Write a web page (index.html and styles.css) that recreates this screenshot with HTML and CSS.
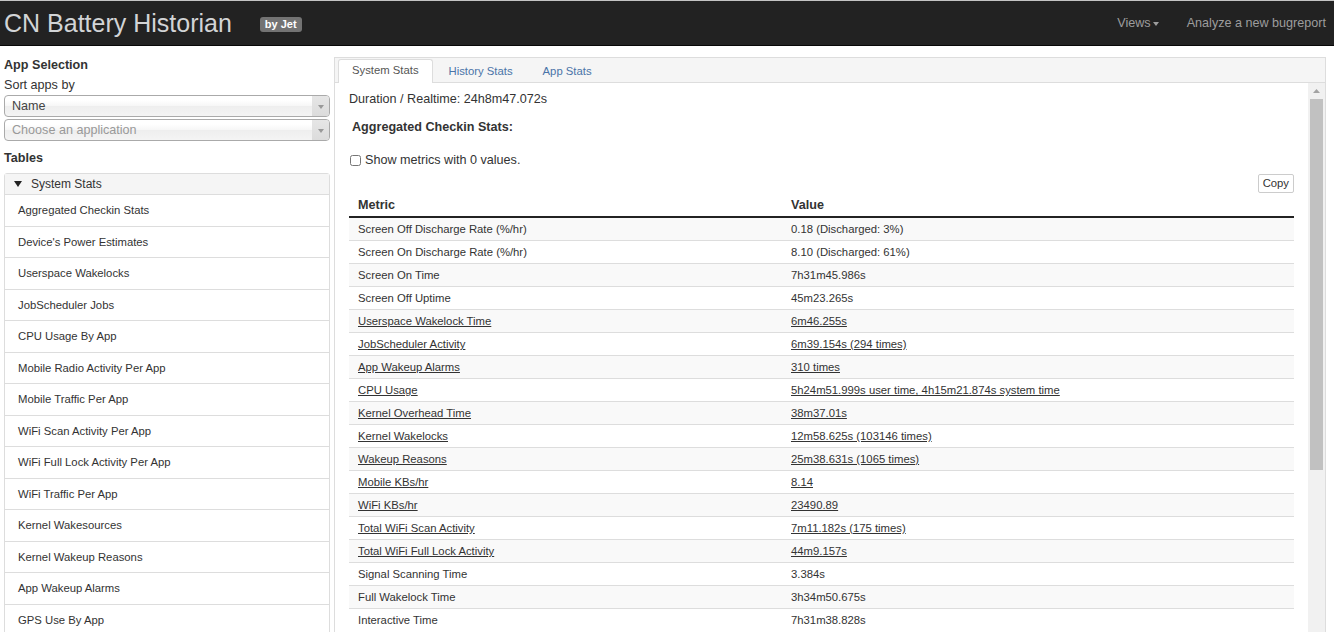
FILE: index.html
```html
<!DOCTYPE html>
<html>
<head>
<meta charset="utf-8">
<title>CN Battery Historian</title>
<link rel="stylesheet" href="styles.css">
</head>
<body>
<header class="navbar">
  <div class="brand">CN Battery Historian</div>
  <span class="badge">by Jet</span>
  <nav class="nav-right">
    <span class="nav-item">Views<span class="caret"></span></span>
    <span class="nav-item">Analyze a new bugreport</span>
  </nav>
</header>
<div class="layout">
  <aside class="sidebar">
    <div class="side-title">App Selection</div>
    <div class="side-label">Sort apps by</div>
    <div class="select"><span class="select-text">Name</span><span class="select-arrow"><span class="tri-sm"></span></span></div>
    <div class="select select-2"><span class="select-text placeholder">Choose an application</span><span class="select-arrow"><span class="tri-sm"></span></span></div>
    <div class="side-title tables-title">Tables</div>
    <div class="panel">
      <div class="panel-head"><span class="tri-down"></span>System Stats</div>
      <div class="panel-item">Aggregated Checkin Stats</div>
      <div class="panel-item">Device's Power Estimates</div>
      <div class="panel-item">Userspace Wakelocks</div>
      <div class="panel-item">JobScheduler Jobs</div>
      <div class="panel-item">CPU Usage By App</div>
      <div class="panel-item">Mobile Radio Activity Per App</div>
      <div class="panel-item">Mobile Traffic Per App</div>
      <div class="panel-item">WiFi Scan Activity Per App</div>
      <div class="panel-item">WiFi Full Lock Activity Per App</div>
      <div class="panel-item">WiFi Traffic Per App</div>
      <div class="panel-item">Kernel Wakesources</div>
      <div class="panel-item">Kernel Wakeup Reasons</div>
      <div class="panel-item">App Wakeup Alarms</div>
      <div class="panel-item">GPS Use By App</div>
    </div>
  </aside>
  <main class="main">
    <div class="tabs">
      <span class="tab active">System Stats</span>
      <span class="tab">History Stats</span>
      <span class="tab">App Stats</span>
    </div>
    <div class="pane">
      <div class="content">
        <div class="duration">Duration / Realtime: 24h8m47.072s</div>
        <div class="section-title">Aggregated Checkin Stats:</div>
        <label class="check-line"><input type="checkbox" class="check">Show metrics with 0 values.</label>
        <div class="copy-row"><button class="copy">Copy</button></div>
        <table class="stats">
          <thead>
            <tr><th class="col-metric">Metric</th><th>Value</th></tr>
          </thead>
          <tbody>
            <tr><td>Screen Off Discharge Rate (%/hr)</td><td>0.18 (Discharged: 3%)</td></tr>
            <tr><td>Screen On Discharge Rate (%/hr)</td><td>8.10 (Discharged: 61%)</td></tr>
            <tr><td>Screen On Time</td><td>7h31m45.986s</td></tr>
            <tr><td>Screen Off Uptime</td><td>45m23.265s</td></tr>
            <tr><td><a class="link">Userspace Wakelock Time</a></td><td><a class="link">6m46.255s</a></td></tr>
            <tr><td><a class="link">JobScheduler Activity</a></td><td><a class="link">6m39.154s (294 times)</a></td></tr>
            <tr><td><a class="link">App Wakeup Alarms</a></td><td><a class="link">310 times</a></td></tr>
            <tr><td><a class="link">CPU Usage</a></td><td><a class="link">5h24m51.999s user time, 4h15m21.874s system time</a></td></tr>
            <tr><td><a class="link">Kernel Overhead Time</a></td><td><a class="link">38m37.01s</a></td></tr>
            <tr><td><a class="link">Kernel Wakelocks</a></td><td><a class="link">12m58.625s (103146 times)</a></td></tr>
            <tr><td><a class="link">Wakeup Reasons</a></td><td><a class="link">25m38.631s (1065 times)</a></td></tr>
            <tr><td><a class="link">Mobile KBs/hr</a></td><td><a class="link">8.14</a></td></tr>
            <tr><td><a class="link">WiFi KBs/hr</a></td><td><a class="link">23490.89</a></td></tr>
            <tr><td><a class="link">Total WiFi Scan Activity</a></td><td><a class="link">7m11.182s (175 times)</a></td></tr>
            <tr><td><a class="link">Total WiFi Full Lock Activity</a></td><td><a class="link">44m9.157s</a></td></tr>
            <tr><td>Signal Scanning Time</td><td>3.384s</td></tr>
            <tr><td>Full Wakelock Time</td><td>3h34m50.675s</td></tr>
            <tr><td>Interactive Time</td><td>7h31m38.828s</td></tr>
          </tbody>
        </table>
      </div>
      <div class="vscroll" aria-hidden="true">
        <div class="vs-btn">
          <svg width="7" height="4" viewBox="0 0 7 4"><path d="M0 4L3.5 0L7 4Z" fill="#a3a3a3"/></svg>
        </div>
        <div class="vs-thumb"></div>
      </div>
    </div>
  </main>
</div>
</body>
</html>
```
FILE: styles.css
```css
html, body {
  margin: 0;
  padding: 0;
}
body {
  font-family: "Liberation Sans", Arial, sans-serif;
  font-size: 12.6px;
  line-height: 18px;
  color: #333;
  background: #fff;
  height: 632px;
  overflow: hidden;
}

/* ---------- navbar ---------- */
.navbar {
  height: 44px;
  background: #222;
  border-top: 1px solid #c4c4c4;
  border-bottom: 1px solid #080808;
  display: flex;
  align-items: center;
  padding: 0 8px 0 4px;
}
.brand {
  font-size: 25px;
  line-height: 44px;
  color: #d2d4d6;
  white-space: nowrap;
}
.badge {
  margin-left: 28px;
  background: #737373;
  color: #fff;
  font-weight: bold;
  font-size: 11px;
  line-height: 15px;
  height: 15px;
  padding: 0 5px;
  border-radius: 3px;
  margin-top: 2px;
}
.nav-right {
  margin-left: auto;
  display: flex;
  align-items: center;
  gap: 28px;
}
.nav-item {
  color: #9d9d9d;
  font-size: 12.6px;
  display: flex;
  align-items: center;
}
.caret {
  display: inline-block;
  width: 0;
  height: 0;
  margin-left: 2px;
  margin-top: 1px;
  border-top: 4px solid #9d9d9d;
  border-left: 3.5px solid transparent;
  border-right: 3.5px solid transparent;
}

/* ---------- layout ---------- */
.layout {
  display: flex;
  align-items: flex-start;
  padding: 0 8px 0 4px;
  gap: 4px;
}

/* ---------- sidebar ---------- */
.sidebar {
  width: 326px;
  flex: none;
  padding-top: 10px;
}
.side-title {
  font-weight: bold;
  line-height: 18px;
}
.side-label {
  margin-top: 2px;
}
.select {
  margin-top: 1px;
  height: 20px;
  border: 1px solid #aaa;
  border-radius: 4px;
  background: linear-gradient(#ffffff 20%, #f6f6f6 50%, #eeeeee 52%, #f4f4f4 100%);
  display: flex;
  align-items: center;
  overflow: hidden;
}
.select-2 {
  margin-top: 2px;
}
.select-text {
  flex: 1;
  padding-left: 7px;
  color: #444;
  line-height: 20px;
}
.select-text.placeholder {
  color: #999;
}
.select-arrow {
  width: 17px;
  align-self: stretch;
  background: linear-gradient(#e6e6e6, #dcdcdc);
  display: flex;
  align-items: center;
  justify-content: center;
}
.tri-sm {
  width: 0;
  height: 0;
  border-top: 4px solid #999;
  border-left: 3px solid transparent;
  border-right: 3px solid transparent;
  margin-top: 2px;
}
.tables-title {
  margin-top: 8px;
}
.panel {
  margin-top: 6px;
  border: 1px solid #ddd;
  border-radius: 3px;
}
.panel-head {
  height: 20px;
  line-height: 20px;
  background: #f5f5f5;
  border-bottom: 1px solid #ddd;
  font-size: 12px;
  color: #333;
  display: flex;
  align-items: center;
  padding-left: 9px;
}
.tri-down {
  width: 0;
  height: 0;
  border-top: 6px solid #222;
  border-left: 4.5px solid transparent;
  border-right: 4.5px solid transparent;
  margin-right: 9px;
}
.panel-item {
  height: 30.5px;
  line-height: 30.5px;
  border-bottom: 1px solid #ddd;
  padding-left: 13px;
  font-size: 11.3px;
  color: #333;
}

/* ---------- main ---------- */
.main {
  flex: 1;
  margin-top: 11px;
  border: 1px solid #ddd;
  display: flex;
  flex-direction: column;
}
.tabs {
  height: 24px;
  background: #f5f5f5;
  border-bottom: 1px solid #ddd;
  display: flex;
  align-items: flex-end;
  padding-left: 3px;
}
.tab {
  font-size: 11.3px;
  line-height: 21px;
  height: 22px;
  padding: 0 13px;
  margin-right: 2px;
  border: 1px solid transparent;
  border-bottom: none;
  color: #4a74a8;
  border-radius: 3px 3px 0 0;
  margin-bottom: -1px;
}
.tab.active {
  background: #fff;
  border-color: #ddd;
  color: #555;
  height: 23px;
}
.pane {
  display: flex;
  height: 600px;
}
.content {
  flex: 1;
  min-width: 0;
  padding: 7px 14px 0 14px;
}
.vscroll {
  width: 17px;
  flex: none;
  background: #f1f1f1;
  display: flex;
  flex-direction: column;
  padding-top: 1px;
}
.vs-btn {
  height: 15px;
  display: flex;
  align-items: center;
  justify-content: center;
}
.vs-btn svg {
  display: block;
  margin-top: -2px;
}
.vs-thumb {
  height: 371px;
  margin: 0 2px;
  background: #c1c1c1;
}
.duration {
  line-height: 18px;
}
.section-title {
  margin-top: 10px;
  padding-left: 3px;
  font-weight: bold;
}
.check-line {
  margin-top: 15px;
  display: flex;
  align-items: center;
  height: 18px;
}
.check {
  width: 11px;
  height: 11px;
  margin: 0 4px 0 1px;
}
.copy-row {
  margin-top: 5px;
  display: flex;
  justify-content: flex-end;
}
.copy {
  font-family: "Liberation Sans", Arial, sans-serif;
  font-size: 11.3px;
  height: 19px;
  line-height: 17px;
  padding: 0 4px;
  background: #fff;
  border: 1px solid #ccc;
  border-radius: 2px;
  color: #333;
}
.stats {
  width: 100%;
  border-collapse: collapse;
}
.stats th {
  text-align: left;
  font-weight: bold;
  height: 23px;
  padding: 0 9px;
  border-bottom: 2px solid #222;
  vertical-align: middle;
}
.stats th.col-metric {
  width: 415px;
}
.stats td {
  font-size: 11.3px;
  height: 22px;
  padding: 0 9px;
  border-top: 1px solid #ddd;
  vertical-align: middle;
}
.stats tbody tr:nth-child(odd) td {
  background: #f9f9f9;
}
.link {
  color: #333;
  text-decoration: underline;
}
```
